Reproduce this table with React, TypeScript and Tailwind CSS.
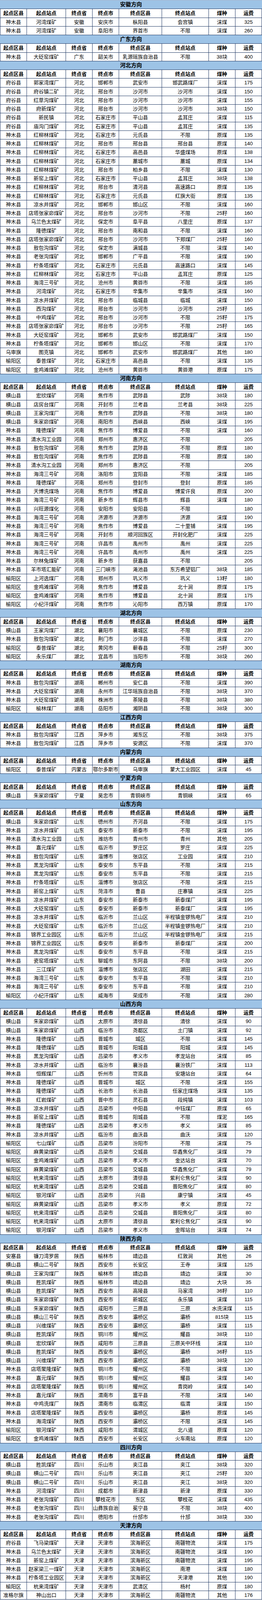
import React from "react";

// "0" in the 煤种 column = blank cell
const sections: { title: string; rows: string[] }[] = [
  {
    title: "安徽方向",
    rows: [
      "神木县 河湾煤矿 安徽 安庆市 枞阳县 会宫镇 沫煤 325",
      "神木县 河湾煤矿 安徽 阜阳市 界首市 不限 沫煤 260",
    ],
  },
  {
    title: "广东方向",
    rows: ["神木县 大砭窑煤矿 广东 韶关市 乳源瑶族自治县 不限 38块 400"],
  },
  {
    title: "河北方向",
    rows: [
      "府谷县 郭家湾煤厂 河北 邯郸市 武安市 邯武路煤厂 沫煤 175",
      "府谷县 府谷镇二矿 河北 邢台市 沙河市 沙河市 沫煤 150",
      "府谷县 红草沟煤矿 河北 邢台市 沙河市 沙河市 沫煤 155",
      "府谷县 府新煤矿 河北 邢台市 沙河市 沙河市 38块 150",
      "府谷县 新民镇 河北 石家庄市 平山县 孟耳庄 沫煤 115",
      "府谷县 庙沟门煤矿 河北 石家庄市 平山县 孟耳庄 沫煤 135",
      "神木县 红柳林煤矿 河北 石家庄市 元氏县 不限 原煤 135",
      "神木县 红柳林煤矿 河北 邢台市 邢台县 邢台县 原煤 140",
      "神木县 红柳林煤矿 河北 石家庄市 高邑县 华盛煤场 原煤 138",
      "神木县 红柳林煤矿 河北 石家庄市 藁城市 藁城 原煤 134",
      "神木县 红柳林煤矿 河北 邢台市 柏乡县 不限 沫煤 130",
      "神木县 新窑上煤矿 河北 石家庄市 平山县 孟耳庄 38块 138",
      "神木县 红柳林煤矿 河北 邢台市 清河县 高速路口 原煤 135",
      "神木县 红柳林煤矿 河北 石家庄市 元氏县 红旗大街 原煤 135",
      "神木县 凉水井煤矿 河北 邯郸市 邯山区 不限 沫煤 160",
      "神木县 店塔张家峁煤矿 河北 邢台市 沙河市 不限 25籽 160",
      "神木县 乌兰色太煤矿 河北 保定市 阜平县 八里庄 原煤 137",
      "神木县 隆德煤矿 河北 邢台市 南和县 不限 沫煤 160",
      "神木县 店塔张家峁煤矿 河北 邢台市 沙河市 下郑煤厂 25籽 160",
      "神木县 敖包沟煤矿 河北 保定市 满城县 不限 沫煤 140",
      "神木县 老张沟煤矿 河北 邯郸市 广平县 不限 沫煤 190",
      "神木县 柠条塔煤矿 河北 石家庄市 元氏县 高速路口 沫煤 145",
      "神木县 红柳林煤矿 河北 石家庄市 平山县 孟耳庄 原煤 125",
      "神木县 海湾三号矿 河北 沧州市 黄骅市 不限 沫煤 185",
      "神木县 河湾煤矿 河北 石家庄市 辛集市 辛集市 沫煤 160",
      "神木县 凉水井煤矿 河北 邢台市 临城县 临城 沫煤 150",
      "神木县 西沟煤矿 河北 邢台市 沙河市 沙河市 25籽 165",
      "神木县 中鸡煤矿 河北 邢台市 沙河市 不限 25籽 175",
      "神木县 店塔张家峁煤矿 河北 邢台市 沙河市 不限 25籽 165",
      "神木县 大砭窑煤矿 河北 邯郸市 武安市 邯武路煤厂 沫煤 150",
      "神木县 柠条塔煤矿 河北 邯郸市 邯山区 不限 沫煤 170",
      "乌审旗 图克镇 河北 邯郸市 武安市 邯武路煤厂 其他 180",
      "榆阳区 泰普煤矿 河北 石家庄市 高邑县 不限 沫煤 135",
      "榆阳区 金鸡滩煤矿 河北 沧州市 黄骅市 黄骅港 原煤 175",
    ],
  },
  {
    title: "河南方向",
    rows: [
      "横山县 宏欣煤矿 河南 焦作市 武陟县 武陟 38块 180",
      "横山县 店房台煤厂 河南 开封市 兰考县 兰考县 38块 225",
      "横山县 王家沟煤厂 河南 焦作市 武陟县 不限 38块 180",
      "横山县 朱家峁煤矿 河南 南阳市 西峡县 西峡 沫煤 195",
      "神木县 隆德煤矿 河南 焦作市 博爱县 不限 沫煤 160",
      "神木县 清水沟工业园 河南 郑州市 惠济区 不限 0 205",
      "神木县 敖包沟煤矿 河南 焦作市 武陟县 不限 原煤 180",
      "神木县 敖包沟煤矿 河南 焦作市 武陟县 不限 原煤 180",
      "神木县 清水沟工业园 河南 郑州市 惠济区 不限 0 205",
      "神木县 海湾三号矿 河南 洛阳市 宜阳县 不限 沫煤 185",
      "神木县 隆德煤矿 河南 郑州市 登封市 登封 原煤 185",
      "神木县 天博洗煤场 河南 焦作市 博爱县 博爱许良 原煤 200",
      "神木县 海湾三号矿 河南 新乡市 辉县市 辉县 沫煤 180",
      "神木县 兴旺源煤化 河南 安阳市 安阳县 不限 0 180",
      "神木县 海湾三号矿 河南 济源市 济源市 济源 沫煤 190",
      "神木县 海湾三号矿 河南 焦作市 博爱县 二十里铺 沫煤 195",
      "神木县 海湾三号矿 河南 开封市 顺河回族区 开封化肥厂 沫煤 225",
      "神木县 海湾三号矿 河南 许昌市 禹州市 禹州 沫煤 225",
      "神木县 海湾三号矿 河南 许昌市 禹州市 禹州 沫煤 225",
      "神木县 尔林兔煤矿 河南 新乡市 获嘉县 不限 0 205",
      "神木县 羊市塔汇能矿 河南 三门峡市 渑池县 东方希望铝厂 38块 185",
      "榆阳区 上河选煤厂 河南 郑州市 巩义市 巩义 13籽 180",
      "榆阳区 金鸡滩煤矿 河南 焦作市 博爱县 北十涧 原煤 175",
      "榆阳区 金鸡滩煤矿 河南 焦作市 博爱县 北十涧 原煤 175",
      "榆阳区 小纪汗煤矿 河南 焦作市 沁阳市 西万镇 原煤 170",
    ],
  },
  {
    title: "湖北方向",
    rows: [
      "横山县 王家沟煤厂 湖北 襄阳市 襄城区 不限 原煤 230",
      "神木县 敖包沟煤矿 湖北 荆门市 沙洋县 不限 沫煤 270",
      "榆阳区 泰普煤矿 湖北 黄冈市 蕲春县 不限 25籽 300",
      "榆阳区 永乐煤厂 湖北 宜昌市 当阳市 不限 38块 260",
    ],
  },
  {
    title: "湖南方向",
    rows: [
      "神木县 敖包沟煤矿 湖南 郴州市 安仁县 不限 沫煤 390",
      "神木县 大砭窑煤矿 湖南 永州市 江华瑶族自治县 不限 38块 370",
      "神木县 大砭窑煤矿 湖南 株洲市 茶陵县 不限 38块 380",
      "榆阳区 榆林煤厂 湖南 岳阳市 湘阴县 不限 38块 300",
    ],
  },
  {
    title: "江西方向",
    rows: [
      "神木县 敖包沟煤矿 江西 萍乡市 湘东区 不限 38块 375",
      "神木县 敖包沟煤矿 江西 萍乡市 安源区 不限 沫煤 370",
    ],
  },
  {
    title: "内蒙方向",
    rows: ["榆阳区 泰普煤矿 内蒙古 鄂尔多斯市 乌审旗 蒙大工业园区 沫煤 45"],
  },
  {
    title: "宁夏方向",
    rows: ["横山县 朱家峁煤矿 宁夏 吴忠市 青铜峡市 青铜峡 沫煤 65"],
  },
  {
    title: "山东方向",
    rows: [
      "横山县 朱家峁煤矿 山东 德州市 齐河县 不限 沫煤 175",
      "神木县 凉水井煤矿 山东 泰安市 新泰市 不限 沫煤 195",
      "神木县 清水沟工业园 山东 潍坊市 青州市 青州 其他 205",
      "神木县 嘉元煤矿 山东 临沂市 罗庄区 罗庄 沫煤 225",
      "神木县 敖包沟煤矿 山东 淄博市 张店区 工业园 沫煤 210",
      "神木县 黑龙沟煤矿 山东 泰安市 东平县 不限 沫煤 215",
      "神木县 黑龙沟煤矿 山东 泰安市 东平县 不限 沫煤 215",
      "神木县 柠条塔煤矿 山东 淄博市 张店区 不限 沫煤 215",
      "神木县 新窑上煤矿 山东 菏泽市 曹县 庄寨镇 沫煤 225",
      "神木县 凉水井煤矿 山东 泰安市 新泰市 新泰煤厂 沫煤 195",
      "神木县 大砭窑煤矿 山东 泰安市 新泰市 新泰煤厂 沫煤 195",
      "神木县 凉水井煤矿 山东 临沂市 兰山区 半程镇金锣热电厂 沫煤 210",
      "神木县 大砭窑煤矿 山东 临沂市 兰山区 半程镇金锣热电厂 沫煤 210",
      "神木县 锦界工业园区 山东 临沂市 兰山区 半程镇金锣热电厂 沫煤 215",
      "神木县 锦界工业园区 山东 泰安市 新泰市 新泰煤厂 沫煤 200",
      "神木县 黑龙沟煤矿 山东 泰安市 东平县 不限 沫煤 215",
      "神木县 瓷窑塔煤矿 山东 聊城市 东阿县 不限 38块 200",
      "神木县 三江煤矿 山东 淄博市 张店区 湖田 沫煤 215",
      "神木县 海湾三号矿 山东 泰安市 东平县 不限 沫煤 210",
      "神木县 海湾三号矿 山东 泰安市 东平县 不限 沫煤 210",
      "榆阳区 小纪汗煤矿 山东 威海市 荣成市 不限 沫煤 280",
    ],
  },
  {
    title: "山西方向",
    rows: [
      "横山县 朱家峁煤矿 山西 太原市 清徐县 清徐 沫煤 90",
      "横山县 朱家峁煤矿 山西 临汾市 尧都区 土门镇 沫煤 92",
      "神木县 隆德煤矿 山西 晋城市 城区 不限 沫煤 145",
      "神木县 隆德煤矿 山西 晋城市 阳城县 阳城 沫煤 145",
      "神木县 黑龙沟煤矿 山西 吕梁市 孝义市 孝龙站台 沫煤 85",
      "神木县 凉水井煤矿 山西 临汾市 襄汾县 襄汾铁厂 沫煤 113",
      "神木县 恒辉煤厂 山西 忻州市 岢岚县 安塘站台 沫煤 64",
      "神木县 隆德煤矿 山西 晋城市 城区 不限 沫煤 155",
      "神木县 隆德煤矿 山西 长治市 长治县 任家庄煤场 沫煤 135",
      "神木县 红岩煤矿 山西 晋中市 灵石县 段纯镇 沫煤 103",
      "神木县 凉水井煤矿 山西 吕梁市 中阳县 中钰煤厂 原煤 65",
      "神木县 新窑上煤矿 山西 晋城市 阳城县 不限 煤泥 165",
      "神木县 隆德煤矿 山西 吕梁市 孝义市 孝义 沫煤 85",
      "神木县 凉水井煤矿 山西 临汾市 曲沃县 曲沃 沫煤 120",
      "榆阳区 七山煤矿 山西 吕梁市 汾阳市 不限 沫煤 75",
      "榆阳区 麻黄梁煤矿 山西 吕梁市 交城县 华鑫焦化厂 沫煤 79",
      "榆阳区 金鸡滩煤矿 山西 吕梁市 孝义市 金达站台 沫煤 70",
      "榆阳区 麻黄梁煤矿 山西 吕梁市 交城县 华鑫焦化厂 沫煤 79",
      "榆阳区 杭来湾煤矿 山西 太原市 清徐县 紫利仑焦化厂 沫煤 90",
      "榆阳区 杭来湾煤矿 山西 吕梁市 交城县 晋阳焦化厂 沫煤 80",
      "榆阳区 银河煤矿 山西 吕梁市 兴县 康宁镇 沫煤 45",
      "榆阳区 麻黄梁煤矿 山西 吕梁市 孝义市 孝义 原煤 72",
      "榆阳区 杭来湾煤矿 山西 吕梁市 交城县 晋阳焦化厂 沫煤 80",
      "榆阳区 杭来湾煤矿 山西 太原市 清徐县 紫利仑焦化厂 沫煤 90",
      "榆阳区 银河煤矿 山西 吕梁市 孝义市 金晖站台 沫煤 74",
    ],
  },
  {
    title: "陕西方向",
    rows: [
      "安塞县 镰刀湾罗居 陕西 榆林市 靖边县 红敦涧 其他 26",
      "横山县 横山二号矿 陕西 西安市 长安区 王寺 沫煤 125",
      "横山县 王家沟煤厂 陕西 榆林市 靖边县 靖边 沫煤 30",
      "横山县 胜凯煤矿 陕西 榆林市 靖边县 靖边 大块 35",
      "横山县 胜凯煤矿 陕西 西安市 高陵县 马家湾 36籽 110",
      "横山县 朱家峁煤矿 陕西 西安市 新城区 永乐镇 沫煤 115",
      "横山县 朱家峁煤矿 陕西 咸阳市 三原县 三原 水洗沫煤 115",
      "横山县 横山三号矿 陕西 西安市 灞桥区 灞桥 815块 115",
      "横山县 兴维煤矿 陕西 西安市 灞桥区 灞桥 沫煤 115",
      "横山县 胜凯煤矿 陕西 铜川市 耀州区 耀县 38块 110",
      "横山县 宏欣煤矿 陕西 咸阳市 三原县 三原关中环线 沫煤 110",
      "横山县 胜凯煤矿 陕西 西安市 灞桥区 灞桥 36籽 115",
      "横山县 兴维煤矿 陕西 西安市 灞桥区 灞桥 38块 120",
      "神木县 店塔聚隆煤矿 陕西 铜川市 耀州区 不限 沫煤 130",
      "神木县 嘉元煤矿 陕西 铜川市 耀州区 耀县 沫煤 140",
      "神木县 店塔聚隆煤矿 陕西 铜川市 耀州区 青岗岭 沫煤 140",
      "神木县 嘉元煤矿 陕西 渭南市 富平县 不限 沫煤 140",
      "神木县 中鸡洗煤厂 陕西 渭南市 临渭区 临渭 沫煤 150",
      "神木县 店塔聚隆煤矿 陕西 西安市 灞桥区 灞桥 原煤 145",
      "神木县 海湾煤矿 陕西 西安市 灞桥区 不限 沫煤 145",
      "榆阳区 银河煤矿 陕西 咸阳市 渭城区 北八道 原煤 120",
      "榆阳区 金鸡滩煤矿 陕西 西安市 长安区 火车南站 原煤 120",
    ],
  },
  {
    title: "四川方向",
    rows: [
      "横山县 胜凯煤矿 四川 乐山市 夹江县 夹江 38块 320",
      "横山县 横山二号矿 四川 乐山市 夹江县 夹江 25籽 320",
      "横山县 横山二号矿 四川 乐山市 夹江县 夹江 38块 320",
      "神木县 河湾煤矿 四川 成都市 新津县 新津 原煤 330",
      "神木县 老张沟煤矿 四川 攀枝花市 东区 攀枝花 沫煤 435",
      "神木县 老张沟煤矿 四川 凉山彝族自治州 冕宁县 不限 38块 400",
      "神木县 老张沟煤矿 四川 德阳市 什邡市 什邡 38块 330",
    ],
  },
  {
    title: "天津方向",
    rows: [
      "府谷县 飞马梁煤矿 天津 天津市 滨海新区 南疆物流 沫煤 175",
      "神木县 乌兰色太煤矿 天津 天津市 滨海新区 南疆物流 沫煤 190",
      "神木县 新窑上煤矿 天津 天津市 滨海新区 南疆物流 沫煤 195",
      "神木县 赵家梁三一煤矿 天津 天津市 滨海新区 南港 沫煤 180",
      "神木县 柠条塔工业园区 天津 天津市 滨海新区 天津港 其他 190",
      "榆阳区 杭来湾煤矿 天津 天津市 武清区 杨村 原煤 180",
      "准格尔旗 神山出口 天津 天津市 滨海新区 南疆物流 其他 176",
    ],
  },
];

const headers = ["起点区县", "起点站点", "终点省", "终点市", "终点区县", "终点站点", "煤种", "运费"];

// 184 rows share the window height (24px each at 4417px)
function Row({ cells, bold }: { cells: string[]; bold?: boolean }) {
  return (
    <div className="grid h-[calc((100vh-1px)/184)] grid-cols-[68px_100px_68px_68px_110px_120px_68px_68px] overflow-hidden border-b border-l border-[#1f3864]">
      {cells.map((c, i) => (
        <div
          key={i}
          className={`flex items-center justify-center overflow-hidden whitespace-nowrap border-r border-[#1f3864] ${
            bold ? "font-bold" : ""
          }`}
        >
          {c === "0" ? "" : c}
        </div>
      ))}
    </div>
  );
}

export default function App() {
  return (
    <div
      className="w-[671px] border-t border-[#a9b6cc] bg-white text-[13px] leading-[13px] text-black"
      style={{ fontFamily: '"Liberation Sans", "Noto Sans CJK SC", sans-serif' }}
    >
      {sections.map((s) => (
        <div key={s.title}>
          <div className="flex h-[calc((100vh-1px)/184)] items-center justify-center overflow-hidden border-b border-[#1f3864] bg-[#9dc3e6] text-[14px] font-bold">
            {s.title}
          </div>
          <Row cells={headers} bold />
          {s.rows.map((r, i) => (
            <Row key={i} cells={r.split(" ")} />
          ))}
        </div>
      ))}
    </div>
  );
}
